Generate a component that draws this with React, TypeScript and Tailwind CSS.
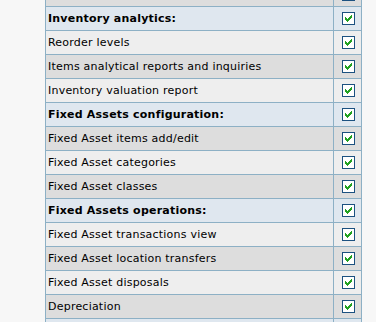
import React from "react";

type Row = { label: string; kind: "head" | "item" };

const rows: Row[] = [
  { label: "Inventory adjustments", kind: "item" },
  { label: "Inventory analytics:", kind: "head" },
  { label: "Reorder levels", kind: "item" },
  { label: "Items analytical reports and inquiries", kind: "item" },
  { label: "Inventory valuation report", kind: "item" },
  { label: "Fixed Assets configuration:", kind: "head" },
  { label: "Fixed Asset items add/edit", kind: "item" },
  { label: "Fixed Asset categories", kind: "item" },
  { label: "Fixed Asset classes", kind: "item" },
  { label: "Fixed Assets operations:", kind: "head" },
  { label: "Fixed Asset transactions view", kind: "item" },
  { label: "Fixed Asset location transfers", kind: "item" },
  { label: "Fixed Asset disposals", kind: "item" },
  { label: "Depreciation", kind: "item" },
  { label: "Manufacturing configuration:", kind: "head" },
];

function Check() {
  return (
    <svg width="13" height="13" viewBox="0 0 13 13" className="block" shapeRendering="crispEdges">
      <rect x="0.5" y="0.5" width="12" height="12" fill="#ffffff" stroke="#1c5180" />
      <path
        d="M3 5h1v1h1v1h1V6h1V5h1V4h1V3h1v3H9v1H8v1H7v1H6v1H5V9H4V8H3z"
        fill="#21a121"
      />
    </svg>
  );
}

export default function App() {
  // item rows alternate across the whole list; section headings keep their own tint
  let itemIndex = 0;
  return (
    <div className="w-[376px] h-[322px] overflow-hidden bg-[#f7f7f7] pl-[45px]">
      <div
        className="-mt-[18px] w-[317px] border-x border-[#8db0c5] text-[11px] tracking-[0.22px] text-black"
        style={{ fontFamily: '"DejaVu Sans", Verdana, sans-serif' }}
      >
        {rows.map((r, i) => {
          let bg = "bg-[#dfe7ef]";
          if (r.kind === "item") {
            bg = itemIndex % 2 === 0 ? "bg-[#dddddd]" : "bg-[#eeeeee]";
            itemIndex++;
          }
          return (
            <div key={i} className={`flex h-[24px] border-t border-[#8db0c5] ${bg}`}>
              <div
                className={`flex-1 flex items-center pl-[2px] pt-[2px] whitespace-nowrap ${
                  r.kind === "head" ? "font-bold" : ""
                }`}
              >
                {r.label}
              </div>
              <div className="w-[28px] border-l border-[#8db0c5] flex items-center pl-[8px]">
                <Check />
              </div>
            </div>
          );
        })}
      </div>
    </div>
  );
}
